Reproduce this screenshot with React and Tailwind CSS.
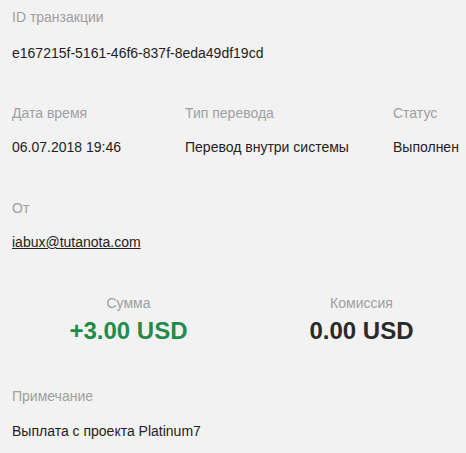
export default function App() {
  const label = "text-[14px] leading-[20px] text-[#a0a0a0]";
  const value = "text-[14px] leading-[20px] text-[#222222]";
  return (
    <div className="w-[466px] h-[453px] bg-[#f2f2f2] overflow-hidden" style={{ fontFamily: '"Liberation Sans", Arial, sans-serif' }}>
      <div className="pl-[12px] pt-[7px]">
        <div className={label}>ID транзакции</div>
        <div className={`${value} mt-[16px]`}>e167215f-5161-46f6-837f-8eda49df19cd</div>

        <div className="flex mt-[40px]">
          <div className="w-[173px] shrink-0">
            <div className={label}>Дата время</div>
            <div className={`${value} mt-[14px]`}>06.07.2018 19:46</div>
          </div>
          <div className="w-[208px] shrink-0">
            <div className={label}>Тип перевода</div>
            <div className={`${value} mt-[14px]`}>Перевод внутри системы</div>
          </div>
          <div className="shrink-0">
            <div className={label}>Статус</div>
            <div className={`${value} mt-[14px]`}>Выполнен</div>
          </div>
        </div>

        <div className="mt-[41px]">
          <div className={label}>От</div>
          <div className={`${value} mt-[14px] underline`}>iabux@tutanota.com</div>
        </div>

        <div className="flex mt-[41px]">
          <div className="w-[233px] shrink-0 flex flex-col items-center">
            <div className={label}>Сумма</div>
            <div className="text-[24px] leading-[28px] font-bold text-[#1f8c4c] mt-[4px]">+3.00 USD</div>
          </div>
          <div className="w-[233px] shrink-0 flex flex-col items-center">
            <div className={label}>Комиссия</div>
            <div className="text-[24px] leading-[28px] font-bold text-[#2a2a2a] mt-[4px]">0.00 USD</div>
          </div>
        </div>

        <div className="mt-[41px]">
          <div className={label}>Примечание</div>
          <div className={`${value} mt-[15px]`}>Выплата с проекта Platinum7</div>
        </div>
      </div>
    </div>
  );
}
